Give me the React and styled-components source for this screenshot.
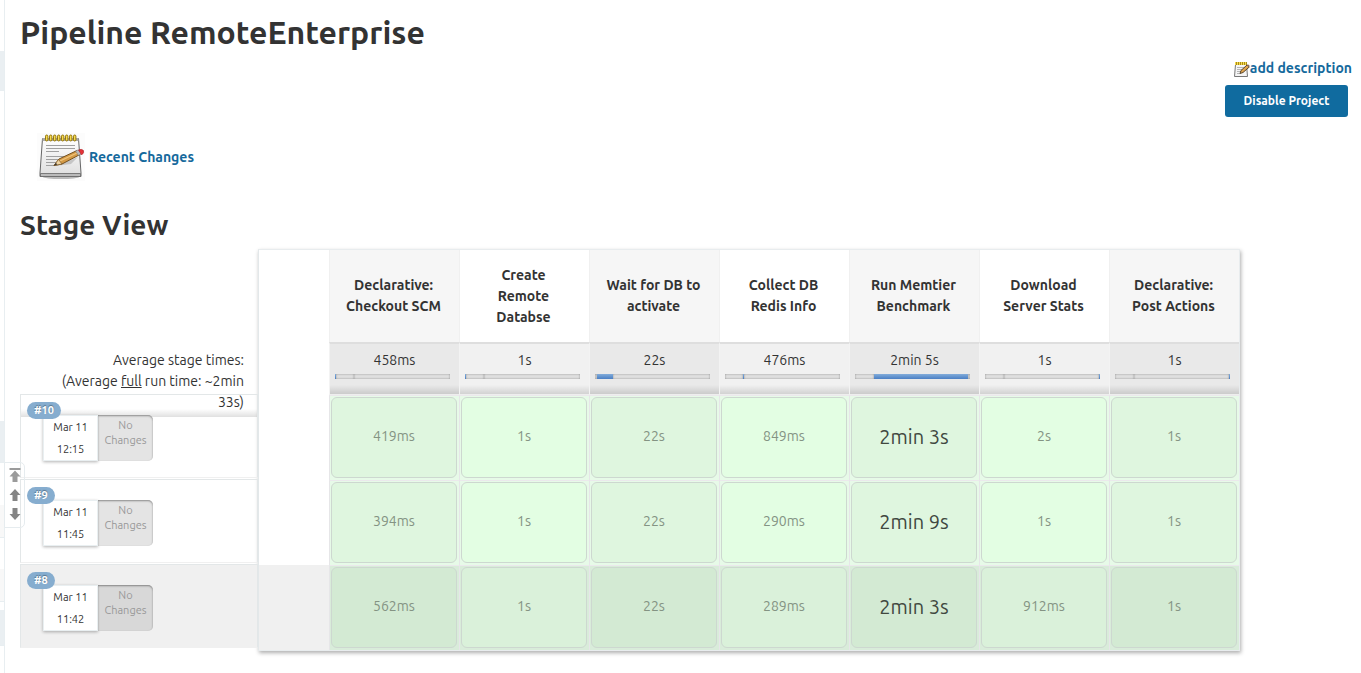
import React from "react";
import styled, { createGlobalStyle } from "styled-components";

const GlobalStyle = createGlobalStyle`
  *, *::before, *::after { box-sizing: border-box; }
  body {
    margin: 0;
    background: #fff;
    color: #333;
    font: 14px/21px Ubuntu, "Open Sans", "Noto Sans", sans-serif;
  }
`;

const Page = styled.div`
  position: relative;
  display: flex;
  min-height: 100vh;
`;

const SideRail = styled.aside`
  flex: none;
  width: 5px;
  border-right: 1px solid #e8eef1;
`;

const RailSlice = styled.div`
  height: ${(p) => p.$height}px;
  margin-top: ${(p) => p.$gap}px;
  background: ${(p) => (p.$strong ? "#eaeff2" : "#f8f8f8")};
  border-bottom: 1px solid #e8eef1;
`;

const Main = styled.main`
  flex: 1;
  min-width: 0;
  padding: 10px 9px 16px 15px;
`;

const Title = styled.h1`
  margin: 0;
  font-size: 32px;
  line-height: 44px;
  font-weight: 700;
`;

const SectionTitle = styled.h2`
  margin: 23px 0 3px;
  font-size: 28px;
  line-height: 42px;
  font-weight: 700;
`;

const Actions = styled.div`
  display: flex;
  flex-direction: column;
  align-items: flex-end;
  margin-top: 4px;
`;

const TextLink = styled.a`
  display: inline-flex;
  align-items: center;
  gap: ${(p) => p.$gap || 0}px;
  color: #15699c;
  font-weight: 600;
  text-decoration: none;
`;

const ProjectButton = styled.button`
  width: 123px;
  height: 32px;
  margin: 6px 4px 0 0;
  padding: 0;
  border: 0;
  border-radius: 3px;
  background: #106b9f;
  color: #fff;
  font: 600 12px/18px Ubuntu, "Open Sans", "Noto Sans", sans-serif;
`;

const RecentChanges = styled.div`
  display: flex;
  margin: 16px 0 0 17px;
`;

const StageView = styled.section`
  display: flex;
  align-items: flex-start;
`;

const Runs = styled.div`
  position: relative;
  flex: none;
  width: 238px;
  padding-top: 145px;
`;

const AverageLabel = styled.div`
  position: absolute;
  top: 101px;
  left: 1px;
  right: 0;
  padding: 0 14px 4px 24px;
  text-align: right;
  background: linear-gradient(rgba(0, 0, 0, 0), rgba(0, 0, 0, 0.12)) bottom / 100% 8px no-repeat;
`;

const RunList = styled.ol`
  display: grid;
  gap: 1px;
  margin: 0;
  padding: 0;
  list-style: none;
`;

const Run = styled.li`
  position: relative;
  display: flex;
  height: 84px;
  padding: 20px 0 0 22px;
  border: 1px solid #e3e7e8;
  border-bottom-color: #f0f0f0;
  background: ${(p) => (p.$active ? "#f0f0f0" : "transparent")};
`;

const RunBadge = styled.a`
  position: absolute;
  z-index: 1;
  top: 7px;
  left: 6px;
  padding: 0 7px;
  border-radius: 9px;
  background: #86adcf;
  color: #fff;
  font-size: 11px;
  line-height: 17px;
  font-weight: 700;
  text-decoration: none;
  text-shadow: 0 -1px 1px rgba(0, 0, 0, 0.35);
`;

const RunDate = styled.div`
  width: 55px;
  height: 46px;
  border: 1px solid #e9eff1;
  background: #fff;
  box-shadow: 0 1px 3px rgba(0, 0, 0, 0.3);
  text-align: center;
  font-size: 11px;
  line-height: 22px;
`;

const RunChanges = styled.div`
  width: 55px;
  height: 46px;
  padding-top: 3px;
  border-radius: 0 5px 5px 0;
  background: ${(p) => (p.$active ? "#d8d8d8" : "#e4e4e4")};
  box-shadow: inset 0 1px 2px rgba(0, 0, 0, 0.4);
  color: #999;
  text-align: center;
  font-size: 11px;
  line-height: 15px;
`;

const Board = styled.div`
  flex: none;
  border: 1px solid #e8ecee;
  border-left-color: #e3e8ea;
  box-shadow: 1px 2px 4px rgba(0, 0, 0, 0.32);
  background: #fff;
`;

const StageTable = styled.table`
  table-layout: fixed;
  width: 980px;
  border-collapse: separate;
  border-spacing: 0;
  text-align: center;
`;

const SpacerCol = styled.col`
  width: 70px;
`;

const StageCol = styled.col`
  width: 130px;
`;

const Blank = styled.td`
  padding: 0;
  background: ${(p) => (p.$active ? "#f0f0f0" : "#fff")};
`;

const StageName = styled.th`
  height: 92px;
  padding: 0 17px 0 15px;
  border-left: 1px solid #f0f0f0;
  background: #fff;
  font-weight: 600;

  &:nth-child(even) { background: #f6f6f6; }
`;

const AverageCell = styled.td`
  height: 53px;
  padding: 6px 0 0;
  vertical-align: top;
  border-left: 1px solid #f3f3f3;
  border-top: 2px solid #dedede;
  border-bottom: 1px solid #eee;
  background: linear-gradient(rgba(0, 0, 0, 0), rgba(0, 0, 0, 0.13)) bottom / 100% 9px no-repeat #f1f1f1;

  &:nth-child(even) { background-color: #e9e9e9; }
`;

const Meter = styled.div`
  display: flex;
  height: 5px;
  margin: 3px 9px 0 5px;
`;

const MeterPart = styled.span`
  flex: ${(p) => p.$share} 0 0;
  background: ${(p) => (p.$filled ? "linear-gradient(#82acda, #4a7fc4)" : "#dfdfdf")};
  box-shadow: ${(p) => (p.$filled ? "none" : "inset 0 0 2px #888")};
`;

const ResultCell = styled.td`
  padding: 1px 2px 2px 1px;
  border-left: 1px solid #e6e6e8;
  border-top: 1px solid #ebe9ec;
  background: ${(p) => (p.$active ? "#d9ecda" : "#e7fae8")};
`;

const Result = styled.div`
  display: grid;
  place-items: center;
  height: 81px;
  padding-bottom: 3px;
  border: 1px solid #cdd8d0;
  border-radius: 6px;
  background: ${(p) => (p.$active ? "#daf1da" : "#e3fee3")};
  color: ${(p) => (p.$slow ? "#41483f" : "#849383")};
  font-size: ${(p) => (p.$slow ? 20 : 14)}px;

  td:nth-child(even) > & { background: ${(p) => (p.$active ? "#d3ead3" : "#dff6df")}; }
`;

const ScrollTools = styled.nav`
  position: absolute;
  top: 462px;
  left: 4px;
  display: flex;
  flex-direction: column;
  align-items: center;
  gap: 7px;
  width: 21px;
  padding: 5px 0 7px;
  border: 1px solid #e6ecef;
  border-radius: 0 5px 5px 0;
`;

const ToolButton = styled.button`
  display: flex;
  padding: 0;
  border: 0;
  background: none;
  color: ${(p) => (p.$dim ? "#9b9b9b" : "#858585")};
`;

const Notepad = ({ size }) => (
  <svg width={size} height={size} viewBox="0 0 48 48" aria-hidden="true">
    <defs>
      <linearGradient id="paper" x1="0" y1="0" x2="0" y2="1">
        <stop offset="0" stopColor="#fff" />
        <stop offset="1" stopColor="#dedede" />
      </linearGradient>
    </defs>
    <rect width="48" height="48" fill="#fcfcfc" />
    <ellipse cx="24" cy="44" rx="18" ry="2" fill="#bbb" />
    <path d="M5.500 5.500H41.500L44 40V43.500H3V40Z" fill="url(#paper)" stroke="#666" />
    <path d="M3.500 40.500H43.500V43.500H3.500Z" fill="#bbb" stroke="#666" strokeWidth=".8" />
    <path d="M5.500 5h36v3h-36z" fill="#aaa" />
    <g fill="#f6dc50" stroke="#8a6a00" strokeWidth=".9">
      {[8, 12, 16, 20, 24, 28, 32, 36].map((x) => (
        <rect key={x} x={x + 0.5} y="2" width="2.400" height="6" rx="1.200" />
      ))}
    </g>
    <path d="M9 12.500H38M9 15.500H38M9 18.500H22M9 23.500H36M9 26.500H30M9 29.500H22M9 32.500H17" stroke="#a0a0a0" />
    <path d="M18 33L41 24L34 31Z" fill="#999" opacity=".45" />
    <path d="M17 32.500L22 26L40 17.500L43 21.500L25 31Z" fill="#d49a45" stroke="#74501f" />
    <path d="M23 28L41 19.500" stroke="#f0c47c" strokeWidth="1.300" />
    <path d="M17 32.500L21.500 26.500L25 31Z" fill="#efd3a0" stroke="#74501f" strokeWidth=".6" />
    <path d="M17 32.500L19 30L20.300 31.500Z" fill="#333" />
    <path d="M38.500 18L41.500 16.800L44.500 20.500L41.500 22.500Z" fill="#bbb" stroke="#777" strokeWidth=".5" />
    <path d="M41.500 17Q44.500 15.500 46.500 17.500Q47.500 20 44.500 22Z" fill="#e33238" stroke="#a02025" strokeWidth=".5" />
  </svg>
);

const SmallNotepad = () => (
  <svg width="16" height="16" viewBox="0 0 16 16" aria-hidden="true">
    <path d="M1.500 3.500H12.500L13.500 15.500H.5Z" fill="#f5f5f5" stroke="#777" />
    <path d="M1 2.500H13" stroke="#8a6a00" strokeWidth="3" />
    <path d="M1 2.500H13" stroke="#f6dc50" strokeWidth="3" strokeDasharray="1.300 .7" />
    <path d="M3 6.500H11M3 8.500H10M3 10.500H7M3 12.500H6" stroke="#b5b5b5" />
    <path d="M6 12.500L7 9.500L13 4L15.300 6L9 11.500Z" fill="#e0a44e" stroke="#4b3920" strokeWidth=".9" />
    <path d="M12.700 4.300L14 3.200L15.700 4.800L14.700 6Z" fill="#8b6a5c" />
  </svg>
);

const arrows = {
  top: "M.5 0h11v2H.5zM6 2.500L11.500 8.500H8.500V14H3.500V8.500H.5Z",
  up: "M6 0L11.500 6H8.500V12H3.500V6H.5Z",
  down: "M6 12L11.500 6H8.500V0H3.500V6H.5Z",
};

const Arrow = ({ kind, height }) => (
  <svg width="12" height={height} viewBox={`0 0 12 ${height}`} aria-hidden="true">
    <path d={arrows[kind]} fill="currentColor" />
  </svg>
);

// Each meter is a list of [share of the bar, filled] parts.
const stages = [
  { name: "Declarative: Checkout SCM", average: "458ms", meter: [[1, true], [18], [96]] },
  { name: "Create Remote Databse", average: "1s", meter: [[1, true], [18], [96]] },
  { name: "Wait for DB to activate", average: "22s", meter: [[2], [16, true], [97]] },
  { name: "Collect DB Redis Info", average: "476ms", meter: [[18], [1, true], [96]] },
  { name: "Run Memtier Benchmark", average: "2min 5s", meter: [[19], [94, true], [2]] },
  { name: "Download Server Stats", average: "1s", meter: [[19], [95], [1, true]] },
  { name: "Declarative: Post Actions", average: "1s", meter: [[19], [95], [1, true]] },
];

const runs = [
  { id: 10, time: "12:15", results: ["419ms", "1s", "22s", "849ms", "2min 3s", "2s", "1s"] },
  { id: 9, time: "11:45", results: ["394ms", "1s", "22s", "290ms", "2min 9s", "1s", "1s"] },
  { id: 8, time: "11:42", active: true, results: ["562ms", "1s", "22s", "289ms", "2min 3s", "912ms", "1s"] },
];

export default function App() {
  return (
    <Page>
      <GlobalStyle />
      <SideRail>
        <RailSlice $gap={51} $height={40} $strong />
        <RailSlice $gap={330} $height={42} $strong />
        <RailSlice $gap={42} $height={33} />
        <RailSlice $gap={31} $height={33} />
        <RailSlice $gap={8} $height={36} $strong />
      </SideRail>
      <Main>
        <Title>Pipeline RemoteEnterprise</Title>
        <Actions>
          <TextLink href="#description"><SmallNotepad />add description</TextLink>
          <ProjectButton type="button">Disable Project</ProjectButton>
        </Actions>
        <RecentChanges>
          <TextLink href="#changes" $gap={4}><Notepad size={48} />Recent Changes</TextLink>
        </RecentChanges>
        <SectionTitle>Stage View</SectionTitle>
        <StageView>
          <Runs>
            <AverageLabel>
              Average stage times:<br />
              (Average <u>full</u> run time: ~2min 33s)
            </AverageLabel>
            <RunList>
              {runs.map((run) => (
                <Run key={run.id} $active={run.active}>
                  <RunBadge href={`#run-${run.id}`}>#{run.id}</RunBadge>
                  <RunDate>Mar 11<br />{run.time}</RunDate>
                  <RunChanges $active={run.active}>No<br />Changes</RunChanges>
                </Run>
              ))}
            </RunList>
          </Runs>
          <Board>
            <StageTable>
              <colgroup>
                <SpacerCol />
                {stages.map((s) => <StageCol key={s.name} />)}
              </colgroup>
              <thead>
                <tr>
                  <Blank />
                  {stages.map((s) => <StageName key={s.name} scope="col">{s.name}</StageName>)}
                </tr>
              </thead>
              <tbody>
                <tr>
                  <Blank />
                  {stages.map((s) => (
                    <AverageCell key={s.name}>
                      {s.average}
                      <Meter>
                        {s.meter.map(([share, filled], i) => (
                          <MeterPart key={i} $share={share} $filled={filled} />
                        ))}
                      </Meter>
                    </AverageCell>
                  ))}
                </tr>
                {runs.map((run) => (
                  <tr key={run.id}>
                    <Blank $active={run.active} />
                    {run.results.map((time, i) => (
                      <ResultCell key={stages[i].name} $active={run.active}>
                        <Result $active={run.active} $slow={time.includes("min")}>{time}</Result>
                      </ResultCell>
                    ))}
                  </tr>
                ))}
              </tbody>
            </StageTable>
          </Board>
        </StageView>
      </Main>
      <ScrollTools aria-label="Build history">
        <ToolButton type="button" $dim aria-label="Newest builds"><Arrow kind="top" height={14} /></ToolButton>
        <ToolButton type="button" aria-label="Newer builds"><Arrow kind="up" height={12} /></ToolButton>
        <ToolButton type="button" aria-label="Older builds"><Arrow kind="down" height={12} /></ToolButton>
      </ScrollTools>
    </Page>
  );
}
